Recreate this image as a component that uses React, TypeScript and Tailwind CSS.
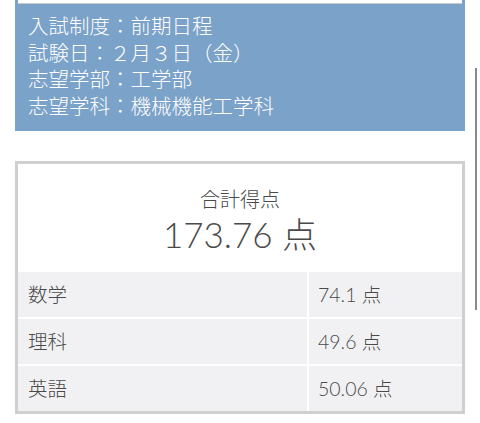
const jp = {
  fontFamily: '"Lato", "Noto Sans CJK JP", sans-serif',
};

const info = [
  "入試制度：前期日程",
  "試験日：２月３日（金）",
  "志望学部：工学部",
  "志望学科：機械機能工学科",
];

const scores = [
  { subject: "数学", score: "74.1 点" },
  { subject: "理科", score: "49.6 点" },
  { subject: "英語", score: "50.06 点" },
];

export default function App() {
  return (
    <div
      className="relative w-[480px] h-[423px] overflow-hidden bg-white font-light"
      style={jp}
    >
      <div className="px-[15px]">
        {/* Exam info */}
        <section className="bg-[#7ba2c8] h-[131px]">
          <div className="mx-[3px] h-[4px] bg-white border-b border-[#c8c8c8]" />
          <div className="pl-[13px] pt-[9px] text-white text-[20.5px] leading-[26.5px]">
            {info.map((line) => (
              <p key={line}>{line}</p>
            ))}
          </div>
        </section>

        {/* Score card */}
        <section className="mt-[30px] border-[3px] border-[#cfcfcf] bg-white">
          <div className="h-[108px] flex flex-col items-center pt-[22px] text-[#4a4a4a]">
            <p className="text-[20px] leading-[26px]">合計得点</p>
            <p className="text-[35px] leading-[44px]">173.76 点</p>
          </div>
          <div className="flex flex-col gap-[2px]">
            {scores.map((row) => (
              <div key={row.subject} className="flex h-[45px] gap-[2px] text-[19.5px] text-[#4a4a4a]">
                <div className="w-[289px] bg-[#f1f1f3] flex items-center pl-[10px]">
                  {row.subject}
                </div>
                <div className="flex-1 bg-[#f1f1f3] flex items-center pl-[9px]">
                  {row.score}
                </div>
              </div>
            ))}
          </div>
        </section>
      </div>

      {/* scroll indicator */}
      <div className="absolute left-[475px] top-[68px] w-[2px] h-[242px] bg-[#8a8a8a]" />
    </div>
  );
}
